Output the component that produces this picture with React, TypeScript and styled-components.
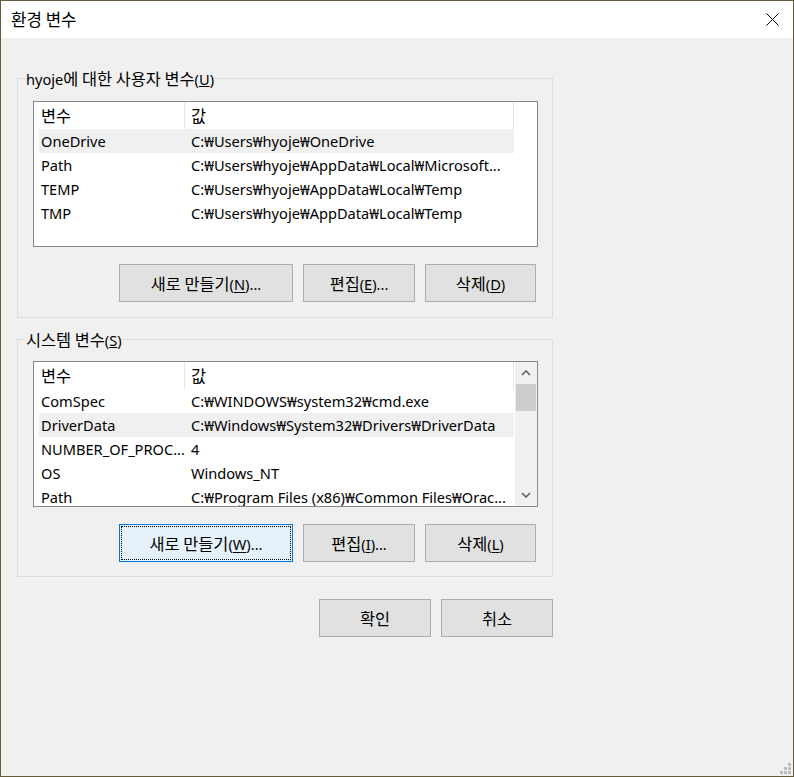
import React from "react";
import styled, { createGlobalStyle } from "styled-components";

const Global = createGlobalStyle`
  html, body { margin: 0; padding: 0; background: #f0f0f0; }
  * { box-sizing: border-box; }
`;

const FONT = `"Noto Sans", "Noto Sans CJK KR", sans-serif`;

const Window = styled.div`
  position: relative;
  width: 794px;
  height: 777px;
  border: 1px solid #645a3c;
  background: #f0f0f0;
  display: flex;
  flex-direction: column;
  font-family: ${FONT};
  font-size: 14.6px;
  color: #000;
`;

/* Hangul runs: the Korean glyphs of the reference sit larger than the Latin ones */
const Ko = styled.span`
  font-family: "Noto Sans CJK KR", sans-serif;
  font-size: 1.12em;
`;

const TitleBar = styled.div`
  height: 37px;
  flex: none;
  background: #fff;
  display: flex;
  align-items: center;
  justify-content: space-between;
  padding: 0 14px 0 10px;
`;

const Title = styled.span`
  font-size: 15px;
  line-height: 20px;
`;

const CloseIcon = styled.svg`
  display: block;
  width: 13px;
  height: 13px;
`;

const Body = styled.div`
  flex: 1;
  display: flex;
  flex-direction: column;
  padding: 30px 0 0 16px;
`;

const Group = styled.fieldset<{ $top: number }>`
  width: 536px;
  min-width: 0;
  margin: ${(p) => p.$top}px 0 0;
  padding: 0;
  border: 1px solid #dcdcdc;
`;

const Legend = styled.legend`
  margin-left: 7px;
  padding: 0 1px;
  height: 20px;
  line-height: 20px;
`;

const GroupBody = styled.div<{ $padTop: number; $padBottom: number }>`
  padding: ${(p) => p.$padTop}px 14px ${(p) => p.$padBottom}px 15px;
`;

const ListBox = styled.div`
  width: 505px;
  height: 146px;
  border: 1px solid #828790;
  background: #fff;
  display: flex;
  overflow: hidden;
`;

const ListView = styled.div`
  flex: 1;
  min-width: 0;
  padding-left: 5px;
  overflow: hidden;
`;

const HeaderRow = styled.div`
  display: flex;
  height: 27px;
`;

const HeaderCell = styled.div<{ $w: number; $pl: number }>`
  width: ${(p) => p.$w}px;
  flex: none;
  padding-left: ${(p) => p.$pl}px;
  border-right: 1px solid #e5e5e5;
  line-height: 27px;
`;

const Row = styled.div<{ $selected?: boolean }>`
  display: flex;
  width: 475px;
  height: 24px;
  background: ${(p) => (p.$selected ? "#f0f0f0" : "transparent")};
`;

const Cell = styled.div<{ $w: number; $pl: number }>`
  width: ${(p) => p.$w}px;
  flex: none;
  padding-left: ${(p) => p.$pl}px;
  line-height: 24px;
  white-space: nowrap;
  overflow: hidden;
`;

const ScrollBar = styled.div`
  width: 22px;
  flex: none;
  background: #f0f0f0;
  display: flex;
  flex-direction: column;
`;

const ScrollArrow = styled.div`
  height: 22px;
  flex: none;
  display: flex;
  align-items: center;
  justify-content: center;
`;

const Thumb = styled.div`
  height: 27px;
  flex: none;
  margin: 0 1px;
  background: #cdcdcd;
`;

const Track = styled.div`
  flex: 1;
`;

const ButtonRow = styled.div`
  display: flex;
  justify-content: flex-end;
  gap: 10px;
  margin-top: 17px;
  padding-right: 2px;
`;

const Button = styled.button<{ $w: number; $focused?: boolean }>`
  width: ${(p) => p.$w}px;
  height: 38px;
  padding: 0;
  font-family: ${FONT};
  font-size: 14.6px;
  line-height: 20px;
  color: #000;
  background: ${(p) => (p.$focused ? "#e5f1fb" : "#e1e1e1")};
  border: 1px solid ${(p) => (p.$focused ? "#0078d7" : "#adadad")};
  outline: ${(p) => (p.$focused ? "1px dotted #000" : "none")};
  outline-offset: -3px;
  u {
    text-underline-offset: 2px;
  }
`;

const Footer = styled.div`
  width: 536px;
  display: flex;
  justify-content: flex-end;
  gap: 10px;
  margin-top: 22px;
`;

const Grip = styled.svg`
  position: absolute;
  right: 2px;
  bottom: 2px;
  width: 11px;
  height: 11px;
`;

type Var = { name: string; value: string; selected?: boolean };

const userVars: Var[] = [
  { name: "OneDrive", value: "C:₩Users₩hyoje₩OneDrive", selected: true },
  { name: "Path", value: "C:₩Users₩hyoje₩AppData₩Local₩Microsoft..." },
  { name: "TEMP", value: "C:₩Users₩hyoje₩AppData₩Local₩Temp" },
  { name: "TMP", value: "C:₩Users₩hyoje₩AppData₩Local₩Temp" },
];

const systemVars: Var[] = [
  { name: "ComSpec", value: "C:₩WINDOWS₩system32₩cmd.exe" },
  { name: "DriverData", value: "C:₩Windows₩System32₩Drivers₩DriverData", selected: true },
  { name: "NUMBER_OF_PROC...", value: "4" },
  { name: "OS", value: "Windows_NT" },
  { name: "Path", value: "C:₩Program Files (x86)₩Common Files₩Orac..." },
];

const Chevron = ({ down }: { down?: boolean }) => (
  <svg width="10" height="6" viewBox="0 0 10 6">
    <polyline
      points={down ? "1,1 5,5 9,1" : "1,5 5,1 9,5"}
      fill="none"
      stroke="#606060"
      strokeWidth="1.6"
    />
  </svg>
);

const VarList = ({ vars, scroll }: { vars: Var[]; scroll?: boolean }) => (
  <ListBox>
    <ListView>
      <HeaderRow>
        <HeaderCell $w={146} $pl={2}><Ko>변수</Ko></HeaderCell>
        <HeaderCell $w={329} $pl={6}><Ko>값</Ko></HeaderCell>
      </HeaderRow>
      {vars.map((v) => (
        <Row key={v.name + v.value} $selected={v.selected}>
          <Cell $w={146} $pl={2}>{v.name}</Cell>
          <Cell $w={329} $pl={6}>{v.value}</Cell>
        </Row>
      ))}
    </ListView>
    {scroll && (
      <ScrollBar>
        <ScrollArrow><Chevron /></ScrollArrow>
        <Thumb />
        <Track />
        <ScrollArrow><Chevron down /></ScrollArrow>
      </ScrollBar>
    )}
  </ListBox>
);

export default function App() {
  return (
    <>
      <Global />
      <Window>
        <TitleBar>
          <Title><Ko>환경 변수</Ko></Title>
          <CloseIcon viewBox="0 0 13 13">
            <path d="M0.5 0.5 L12.5 12.5 M12.5 0.5 L0.5 12.5" stroke="#000" strokeWidth="1" fill="none" />
          </CloseIcon>
        </TitleBar>
        <Body>
          <Group $top={0}>
            <Legend>hyoje<Ko>에 대한 사용자 변수</Ko>(<u>U</u>)</Legend>
            <GroupBody $padTop={13} $padBottom={15}>
              <VarList vars={userVars} />
              <ButtonRow>
                <Button $w={174}><Ko>새로 만들기</Ko>(<u>N</u>)...</Button>
                <Button $w={112}><Ko>편집</Ko>(<u>E</u>)...</Button>
                <Button $w={111}><Ko>삭제</Ko>(<u>D</u>)</Button>
              </ButtonRow>
            </GroupBody>
          </Group>
          <Group $top={11}>
            <Legend><Ko>시스템 변수</Ko>(<u>S</u>)</Legend>
            <GroupBody $padTop={12} $padBottom={14}>
              <VarList vars={systemVars} scroll />
              <ButtonRow>
                <Button $w={174} $focused><Ko>새로 만들기</Ko>(<u>W</u>)...</Button>
                <Button $w={112}><Ko>편집</Ko>(<u>I</u>)...</Button>
                <Button $w={111}><Ko>삭제</Ko>(<u>L</u>)</Button>
              </ButtonRow>
            </GroupBody>
          </Group>
          <Footer>
            <Button $w={112}><Ko>확인</Ko></Button>
            <Button $w={112}><Ko>취소</Ko></Button>
          </Footer>
        </Body>
        <Grip viewBox="0 0 11 11">
          <g fill="#bcbcbc">
            <rect x="8" y="0" width="3" height="3" />
            <rect x="4" y="4" width="3" height="3" />
            <rect x="8" y="4" width="3" height="3" />
            <rect x="0" y="8" width="3" height="3" />
            <rect x="4" y="8" width="3" height="3" />
            <rect x="8" y="8" width="3" height="3" />
          </g>
        </Grip>
      </Window>
    </>
  );
}
